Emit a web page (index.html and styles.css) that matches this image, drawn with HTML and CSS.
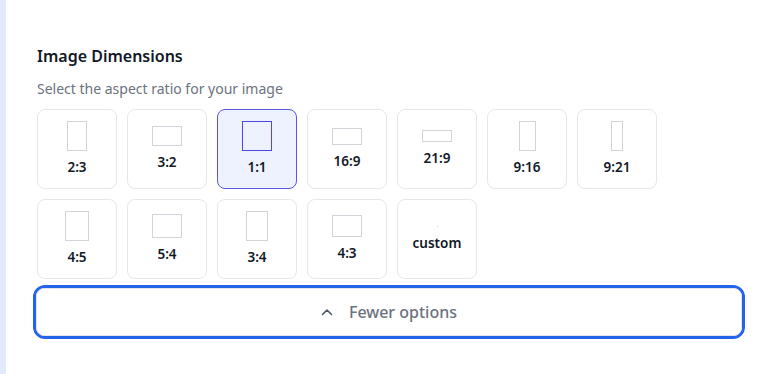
FILE: index.html
```html
<!DOCTYPE html>
<html lang="en">
<head>
    <meta charset="UTF-8">
    <meta name="viewport" content="width=device-width, initial-scale=1.0">
    <title>Image Dimensions</title>
    <link rel="stylesheet" href="styles.css">
</head>
<body>
    <div class="panel">
        <section class="dims">
            <h2>Image Dimensions</h2>
            <p class="hint">Select the aspect ratio for your image</p>

            <div class="ratio-grid">
                <button class="ratio"><span class="shape" style="width:20px;height:30px"></span><span class="label">2:3</span></button>
                <button class="ratio"><span class="shape" style="width:30px;height:20px"></span><span class="label">3:2</span></button>
                <button class="ratio active"><span class="shape" style="width:30px;height:30px"></span><span class="label">1:1</span></button>
                <button class="ratio"><span class="shape" style="width:30px;height:17px"></span><span class="label">16:9</span></button>
                <button class="ratio"><span class="shape" style="width:30px;height:12px"></span><span class="label">21:9</span></button>
                <button class="ratio"><span class="shape" style="width:17px;height:30px"></span><span class="label">9:16</span></button>
                <button class="ratio"><span class="shape" style="width:12px;height:30px"></span><span class="label">9:21</span></button>
                <button class="ratio"><span class="shape" style="width:24px;height:30px"></span><span class="label">4:5</span></button>
                <button class="ratio"><span class="shape" style="width:30px;height:24px"></span><span class="label">5:4</span></button>
                <button class="ratio"><span class="shape" style="width:22px;height:30px"></span><span class="label">3:4</span></button>
                <button class="ratio"><span class="shape" style="width:30px;height:22px"></span><span class="label">4:3</span></button>
                <button class="ratio"><span class="shape empty"></span><span class="label">custom</span></button>
            </div>

            <button class="toggle">
                <svg width="12" height="8" viewBox="0 0 12 8" fill="none" stroke="#4b5563" stroke-width="1.6" stroke-linecap="round" stroke-linejoin="round"><path d="M1.5 6.5 6 2l4.5 4.5"/></svg>
                <span>Fewer options</span>
            </button>
        </section>
    </div>
</body>
</html>
```

FILE: styles.css
```css
* { margin: 0; padding: 0; box-sizing: border-box; }
body {
    font-family: 'Noto Sans', 'Open Sans', sans-serif;
    background: #ffffff;
    color: #111827;
}
.panel {
    min-height: 374px;
    border-left: 6px solid #e4e9fd;
    padding: 44px 23px 0 31px;
}
.dims h2 {
    font-size: 16px;
    line-height: 24px;
    font-weight: 600;
    color: #111827;
    margin-bottom: 11px;
}
.hint {
    font-size: 14px;
    line-height: 20px;
    color: #6b7280;
    margin-bottom: 10px;
}
.ratio-grid {
    display: grid;
    grid-template-columns: repeat(7, 80px);
    gap: 10px;
}
.ratio {
    width: 80px;
    height: 80px;
    border: 1px solid #e5e7eb;
    border-radius: 8px;
    background: #ffffff;
    display: flex;
    flex-direction: column;
    align-items: center;
    justify-content: center;
    gap: 6px;
    font-family: inherit;
    cursor: pointer;
}
.ratio.active {
    border-color: #5b55e0;
    background: #eef2fe;
}
.shape {
    display: block;
    border: 1px solid #d1d5db;
}
.ratio.active .shape {
    border-color: #4f46e5;
}
.shape.empty {
    width: 1px;
    height: 1px;
    border: none;
    background: #c8ccd3;
}
.label {
    font-size: 13.5px;
    line-height: 20px;
    font-weight: 600;
    color: #111827;
}
.toggle {
    position: relative;
    display: flex;
    align-items: center;
    justify-content: center;
    gap: 16px;
    width: calc(100% + 8px);
    height: 54px;
    margin: 6px -4px 0;
    border: 3px solid #2563eb;
    border-radius: 12px;
    background: #ffffff;
    font-family: inherit;
    font-size: 16px;
    font-weight: 500;
    color: #6b7280;
    cursor: pointer;
}
.toggle::after {
    content: '';
    position: absolute;
    inset: 0;
    border: 1px solid #e3e6ee;
    border-radius: 8px;
    pointer-events: none;
}
```
